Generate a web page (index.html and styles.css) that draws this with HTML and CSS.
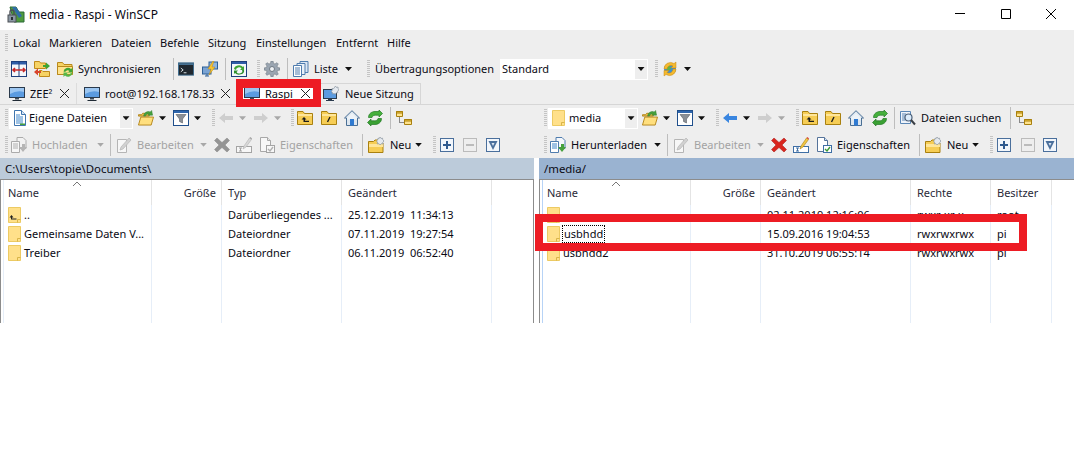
FILE: index.html
```html
<!DOCTYPE html>
<html lang="de">
<head>
<meta charset="utf-8">
<title>media - Raspi - WinSCP</title>
<link rel="stylesheet" href="styles.css">
</head>
<body>
<svg class="defs" aria-hidden="true">
  <symbol id="logo" viewBox="0 0 18 18"><path d="M3 1h6l3 5h5v10H7z" fill="#4f9a3c" stroke="#2c6a38"/><path d="M5 1h4l6 9-3 2z" fill="#2f6da8"/><rect x="1" y="9" width="8" height="7" fill="#8b97a3" stroke="#4a4f55"/><path d="M3 9V6a2 2 0 0 1 4 0v3" fill="none" stroke="#4a4f55" stroke-width="1.4"/><rect x="4" y="11" width="2" height="3" fill="#2b3036"/></symbol>
  <symbol id="compare" viewBox="0 0 16 16"><rect x=".5" y=".5" width="15" height="15" fill="#f4f7fb" stroke="#1f3f7c"/><rect x="1" y="1" width="14" height="2.5" fill="#2f5da8"/><path d="M8 1v14" stroke="#1f3f7c"/><path d="M2 9h12M4 7 2 9l2 2M12 7l2 2-2 2" fill="none" stroke="#c62828" stroke-width="1.6"/></symbol>
  <symbol id="syncf" viewBox="0 0 16 16"><path d="M.5.500h5l1 1.500h5v5.500H.5z" fill="#f6d365" stroke="#c08a1a"/><path d="M5.500 9.500h2.500l1 1h6.500v5h-10z" fill="#f6d365" stroke="#c08a1a"/><path d="M9 4h3V1.500L16 5l-4 3.500V6H9z" fill="#3fa535"/><path d="M7 12H4v2.500L0 11l4-3.500V10h3z" fill="#d8452c"/></symbol>
  <symbol id="sync" viewBox="0 0 16 16"><path d="M.5 1.500h5l1.500 2h8v10H.5z" fill="#f6d365" stroke="#b9891c"/><path d="M.5 5.500h15v8H.5z" fill="#ffe38d" stroke="#b9891c"/><path d="M6.500 10.500a4.500 4.500 0 0 1 7.500-2.500l1.500-1.200v4.700h-4.700l1.600-1.500a2.600 2.600 0 0 0-4.200 1z" fill="#3fa535"/><path d="M15.500 12a4.500 4.500 0 0 1-7.500 2.500L6.500 16v-4.500h4.700L9.600 13a2.600 2.600 0 0 0 4.200-1z" fill="#56b748"/></symbol>
  <symbol id="term" viewBox="0 0 17 16"><rect x=".5" y="1.500" width="16" height="13" fill="#20282f" stroke="#3d6c8e"/><rect x="1" y="2" width="15" height="1.600" fill="#4e7ea3"/><path d="m3 7 2.500 2L3 11" fill="none" stroke="#dfe6ea"/><path d="M6 12h3" stroke="#dfe6ea"/></symbol>
  <symbol id="putty" viewBox="0 0 16 16"><rect x="7" y="1" width="8.500" height="7" fill="#8fb5df" stroke="#2c5f96"/><rect x=".5" y="6" width="8.500" height="7" fill="#7aa3d3" stroke="#2c5f96"/><path d="M3 15h4M5 13v2" stroke="#2c5f96"/><path d="M11 0 6 8h3l-2 6 6-8h-3l2-6z" fill="#f7c531" stroke="#c18a14" stroke-width=".5"/></symbol>
  <symbol id="winref" viewBox="0 0 16 16"><rect x=".5" y=".5" width="15" height="15" fill="#f4f7fb" stroke="#1f3f7c"/><rect x="1" y="1" width="14" height="2" fill="#2f5da8"/><path d="M3 8a5 4 0 0 1 9-2l1-1v4H9l1.500-1.500A3 2.500 0 0 0 5 9z" fill="#3fa535"/><path d="M13 9a5 4 0 0 1-9 3l-1 1V9.500h4L5.500 11a3 2.500 0 0 0 5.500-2z" fill="#2e8f2c"/></symbol>
  <symbol id="gear" viewBox="0 0 16 16"><path d="M7 0h2l.5 2.400 1.500.6 2-1.300L14.300 3 13 5l.6 1.500L16 7v2l-2.400.5-.6 1.500 1.300 2-1.300 1.300-2-1.300-1.500.6L9 16H7l-.5-2.400-1.500-.6-2 1.300L1.700 13 3 11l-.6-1.500L0 9V7l2.400-.5L3 5 1.700 3 3 1.700 5 3l1.500-.6z" fill="#9aa5b1" stroke="#6e7883" stroke-width=".6"/><circle cx="8" cy="8" r="2.500" fill="#eef1f4" stroke="#6e7883"/></symbol>
  <symbol id="list" viewBox="0 0 16 16"><path d="M7 .5h8v11H7z" fill="#dbe6f3" stroke="#4f7cae"/><path d="M4 2.500h8v11H4z" fill="#e9f0f8" stroke="#4f7cae"/><path d="M.5 4.500h8v11h-8z" fill="#fff" stroke="#4f7cae"/><path d="M2 7h5M2 9h5M2 11h5M2 13h5" stroke="#4f7cae"/></symbol>
  <symbol id="globe" viewBox="0 0 16 16"><circle cx="8" cy="8" r="6" fill="#3d8fd8"/><path d="M5 4l3 1 1 3-3 2-2-2zM10 10l3-1-1 3-2 1z" fill="#5fb24a"/><path d="M2 8a6.500 6.500 0 0 1 10-5.500L14 1v6H9l2-2a4 4 0 0 0-6 3z" fill="#f5b92f" stroke="#c68a12" stroke-width=".5"/><path d="M14 8a6.500 6.500 0 0 1-10 5.500L2 15V9.500h5l-2 2a4 4 0 0 0 6-3.500z" fill="#f5b92f" stroke="#c68a12" stroke-width=".5"/></symbol>
  <symbol id="mon" viewBox="0 0 16 16"><rect x=".5" y="1.500" width="15" height="10" fill="#5b9be0" stroke="#2a3a4c"/><path d="M1 2h14v4Q8 4 1 8z" fill="#9cc6f1"/><path d="M6 12h4v1.500H6z" fill="#3d4b5a"/><path d="M3.500 14h9v1h-9z" fill="#1f2a35"/></symbol>
  <symbol id="monnew" viewBox="0 0 16 16"><rect x=".5" y="3.500" width="13" height="9" fill="#5b9be0" stroke="#2a3a4c"/><path d="M5 13h4v1H5zM3 14h8v1H3z" fill="#2a3a4c"/><path d="m12.500 0 1 1.500 1.500-.5.200 1.700L16 4l-1.500 1L15 6.500 13 7l-.5 1.300L11 7.500 9.500 8l-.2-1.700L8 5.500l1.300-1.200L9 2.500l1.700.1z" fill="#e4e9ef" stroke="#7d8a96" stroke-width=".6"/></symbol>
  <symbol id="mydoc" viewBox="0 0 16 16"><path d="M2.500.5h7l4 4v11h-11z" fill="#fff" stroke="#3f74ad"/><path d="M9.500.5v4h4" fill="#d7e6f6" stroke="#3f74ad"/><path d="M4 5h4M4 7h7M4 9h7M4 11h7M4 13h7" stroke="#3f85c9"/><path d="M8 13.500h5v1.500H8z" fill="#46a13e"/></symbol>
  <symbol id="open" viewBox="0 0 17 16"><path d="M.5 4.500h3l1.500-1.500h7v3H.5z" fill="#e8be4c" stroke="#b3851b"/><path d="M.5 15.500l2.500-8.500h13.500l-2.500 8.500z" fill="#ffdf7e" stroke="#b3851b"/><path d="M6 6a5 5 0 0 1 7-4.500L14.500 0l1 5h-5l1.500-1.500A3.500 3.500 0 0 0 8 6z" fill="#46a13e" stroke="#2e7d2e" stroke-width=".5"/></symbol>
  <symbol id="filter" viewBox="0 0 16 16"><rect x=".5" y=".5" width="15" height="15" fill="#fff" stroke="#1f4f8c"/><rect x="1" y="1" width="14" height="2" fill="#2f66ad"/><path d="M3 4.500h10L9.500 9v4l-3-1.500V9z" fill="#8a8f96" stroke="#5b6067" stroke-width=".6"/></symbol>
  <symbol id="back" viewBox="0 0 16 12"><path d="M7 1 1 6l6 5V8h8V4H7z"/></symbol>
  <symbol id="fwd" viewBox="0 0 16 12"><path d="M9 1l6 5-6 5V8H1V4h8z"/></symbol>
  <symbol id="up" viewBox="0 0 16 16"><path d="M.5 3.500v-2h5.500l1.500 2h8v11h-15z" fill="#f6cd55" stroke="#a9800f"/><path d="M1 4h14v2H1z" fill="#ffe69a"/><path d="M7 7 4.500 9.500H6.500V12H12v-1.200H8V9.500h1.500z" fill="#1c1c1c"/></symbol>
  <symbol id="root" viewBox="0 0 16 16"><path d="M.5 3.500v-2h5.500l1.500 2h8v11h-15z" fill="#f6cd55" stroke="#a9800f"/><path d="M1 4h14v2H1z" fill="#ffe69a"/><path d="M6.500 12 9 7" stroke="#1c1c1c" stroke-width="1.400"/></symbol>
  <symbol id="home" viewBox="0 0 16 16"><path d="M8 .7.500 8h2v7.500h11V8h2z" fill="#dde6ef" stroke="#4a6f95"/><path d="M3 8l5-5 5 5v1.500H3z" fill="#eef3f8"/><rect x="6" y="9" width="4" height="6.500" fill="#2f7ad1"/></symbol>
  <symbol id="refresh" viewBox="0 0 16 16"><path d="M1.500 7.500C1.500 3.500 5 1.500 8 1.500h4V0l3.500 3.500L12 7V5.200H8.500C6.500 5.200 5.500 6 5 7.500z" fill="#46b03c" stroke="#237a25" stroke-width=".7"/><path d="M14.500 8.500c0 4-3.500 6-6.500 6H4V16L.5 12.500 4 9v1.800h3.500c2 0 3-.8 3.500-2.300z" fill="#3aa033" stroke="#237a25" stroke-width=".7"/></symbol>
  <symbol id="tree" viewBox="0 0 16 16"><path d="M.5 1.500h6v5h-6zM8.500 9.500h7v5h-7z" fill="#ffe38d" stroke="#a9800f"/><path d="M.5 1.500h6v1.500h-6zM8.500 9.500h7V11h-7z" fill="#f2c744" stroke="#a9800f"/><path d="M3.500 7.500v5h4" fill="none" stroke="#222" stroke-dasharray="1 1"/></symbol>
  <symbol id="search" viewBox="0 0 16 16"><path d="M.5 1.500h10v12H.5z" fill="#eef3fa" stroke="#5a86b5"/><path d="M2 4h4M2 6h3M2 8h3M2 10h3" stroke="#5a86b5"/><circle cx="8.500" cy="7.500" r="3.500" fill="#dcecfb" stroke="#4a5f78" stroke-width="1.200"/><path d="m11 10 4 4.500" stroke="#3a3f45" stroke-width="2"/></symbol>
  <symbol id="upl" viewBox="0 0 16 16"><path d="M6 .5h6l3 3v8H6z" fill="#f4f7fb" stroke="#4f7cae"/><path d="M.5 4.500h8v11h-8z" fill="#fff" stroke="#4f7cae"/><path d="M2 7h5M2 9h5M2 11h5" stroke="#3f85c9"/><path d="M8 10h3V7h3v3h2l-4 5z" fill="#46a13e"/></symbol>
  <symbol id="edit" viewBox="0 0 16 16"><path d="M1.500 2.500h9v13h-9z" fill="#fff" stroke="#888"/><path d="M4 13l1-3 8-9 2 2-8 9z" fill="#bbb" stroke="#888" stroke-width=".7"/></symbol>
  <symbol id="del" viewBox="0 0 16 16"><path d="M3 1l5 4.500L13 1l2.500 2.500L11 8l4.500 4.500L13 15l-5-4.500L3 15 .5 12.500 5 8 .5 3.500z" fill="#d9251d" stroke="#a31515" stroke-width=".5"/></symbol>
  <symbol id="ren" viewBox="0 0 16 16"><rect x=".5" y="9.500" width="15" height="6" fill="#fff" stroke="#3f6fa5"/><path d="M3 11h3M4.500 11v3M3 14h3" stroke="#3f6fa5"/><path d="M7 12l1-3 5.500-8 2 1.500L10 10z" fill="#f2c744" stroke="#a9800f" stroke-width=".6"/><path d="m13.500 1 2 1.500 .5-1L14.500 0z" fill="#d9433a"/></symbol>
  <symbol id="prop" viewBox="0 0 16 16"><path d="M1.500.5h7l3 3v11h-10z" fill="#fff" stroke="#55739a"/><path d="M8.500.5v3h3" fill="#d7e6f6" stroke="#55739a"/><rect x="7.500" y="8.500" width="8" height="7" fill="#fff" stroke="#3f6fa5"/><path d="m9 12 2 2 3-4" fill="none" stroke="#3c9a35" stroke-width="1.400"/></symbol>
  <symbol id="newf" viewBox="0 0 16 16"><path d="M.5 15.500v-11h5l1.500-1.500h4v3h4v9.500z" fill="#f6cd55" stroke="#a9800f"/><path d="M1 7h14v3H1z" fill="#ffe69a"/><path d="m12 0 1 1.500 1.500-.4.300 1.700L16 4l-1.200 1.200.2 1.800-1.800-.2L12 8l-1-1.300-1.700.3.200-1.800L8.500 4l1.300-1.200L10 1.100l1.200.4z" fill="#e4e9ef" stroke="#7d8a96" stroke-width=".6"/></symbol>
  <symbol id="plus" viewBox="0 0 14 14"><rect x=".5" y=".5" width="13" height="13" fill="#f2f6fb" stroke="#4a6f9c"/><path d="M7 3v8M3 7h8" stroke="#2f5a8f" stroke-width="2"/></symbol>
  <symbol id="minus" viewBox="0 0 14 14"><rect x=".5" y=".5" width="13" height="13" fill="#eee" stroke="#bbb"/><path d="M3 7h8" stroke="#bbb" stroke-width="2"/></symbol>
  <symbol id="vee" viewBox="0 0 14 14"><rect x=".5" y=".5" width="13" height="13" fill="#f2f6fb" stroke="#4a6f9c"/><path d="M2.500 3h9L7 12z" fill="#4a6f9c"/><path d="M5.500 5h3L7 8z" fill="#dbe5f1"/></symbol>
  <symbol id="folder" viewBox="0 0 13 16"><path d="M.5.500h12v15H.5z" fill="#ffe08a" stroke="#ecca63"/><path d="M9.500 15.500v-3h3" fill="none" stroke="#d9b548"/></symbol>
  <symbol id="folderup" viewBox="0 0 13 16"><path d="M.5.500h12v15H.5z" fill="#ffe08a" stroke="#ecca63"/><path d="M9.500 15.500v-3h3" fill="none" stroke="#d9b548"/><path d="M3.500 8 1.500 10.500h1.500V12.500h5.500V11.500H4V10.500h1.500z" fill="#222"/></symbol>
</svg>

<div class="app">
  <header class="title">
    <svg class="logo"><use href="#logo"/></svg>
    <span class="title-text">media - Raspi - WinSCP</span>
    <div class="win">
      <span class="win-btn"><svg class="win-ic"><path d="M0 4.500h10" stroke="#000"/></svg></span>
      <span class="win-btn"><svg class="win-ic"><path d="M.5.500h9v9h-9z" fill="none" stroke="#000"/></svg></span>
      <span class="win-btn"><svg class="win-ic"><path d="m0 0 10 10M10 0 0 10" stroke="#000"/></svg></span>
    </div>
  </header>

  <div class="chrome">
    <nav class="tb menu">
      <i class="grip"></i>
      <span class="m m-lokal">Lokal</span><span class="m m-mark">Markieren</span><span class="m m-dat">Dateien</span><span class="m m-bef">Befehle</span><span class="m m-sit">Sitzung</span><span class="m m-ein">Einstellungen</span><span class="m m-ent">Entfernt</span><span class="m">Hilfe</span>
    </nav>

    <div class="tb tb-main">
      <i class="grip"></i>
      <svg class="ic ml3"><use href="#compare"/></svg>
      <svg class="ic ml7"><use href="#syncf"/></svg>
      <svg class="ic ml7"><use href="#sync"/></svg>
      <span class="lab ml5 w83">Synchronisieren</span>
      <i class="sep ml12"></i>
      <svg class="ic ml4"><use href="#term"/></svg>
      <svg class="ic ml8"><use href="#putty"/></svg>
      <i class="sep ml7"></i>
      <svg class="ic ml5"><use href="#winref"/></svg>
      <i class="grip ml10"></i>
      <svg class="ic ml4"><use href="#gear"/></svg>
      <i class="sep ml7"></i>
      <svg class="ic ml5"><use href="#list"/></svg>
      <span class="lab ml5 w28">Liste</span>
      <i class="caret ml3"></i>
      <i class="grip ml15"></i>
      <span class="lab ml5 w120">Übertragungsoptionen</span>
      <div class="combo combo-std ml5"><span class="combo-text">Standard</span><span class="combo-arrow"><i class="caret"></i></span></div>
      <i class="grip ml7"></i>
      <svg class="ic ml4"><use href="#globe"/></svg>
      <i class="caret ml6"></i>
    </div>

    <div class="tabs">
      <div class="tab tab-zee"><svg class="ic"><use href="#mon"/></svg><span class="lab ml5 w22">ZEE²</span><svg class="x ml8"><path d="m0 0 9 9M9 0 0 9" stroke="#222"/></svg></div>
      <div class="tab tab-root"><svg class="ic"><use href="#mon"/></svg><span class="lab ml5 w108">root@192.168.178.33</span><svg class="x ml8"><path d="m0 0 9 9M9 0 0 9" stroke="#222"/></svg></div>
      <div class="tab tab-active"><svg class="ic"><use href="#mon"/></svg><span class="lab ml5 w28">Raspi</span><svg class="x ml8"><path d="m0 0 9 9M9 0 0 9" stroke="#222"/></svg></div>
      <div class="tab tab-new"><svg class="ic"><use href="#monnew"/></svg><span class="lab ml6 w70">Neue Sitzung</span></div>
    </div>

    <div class="panes-tb">
      <div class="pane-tb">
        <div class="tb tb-sub">
          <i class="grip"></i>
          <div class="combo combo-l ml1"><svg class="ic ml3"><use href="#mydoc"/></svg><span class="combo-text ml1">Eigene Dateien</span><span class="combo-arrow"><i class="caret"></i></span></div>
          <svg class="ic ml5"><use href="#open"/></svg>
          <i class="caret ml5"></i>
          <svg class="ic ml7"><use href="#filter"/></svg>
          <i class="caret ml5"></i>
          <i class="grip ml11"></i>
          <svg class="arrow ml3 off"><use href="#back"/></svg>
          <i class="caret off ml5"></i>
          <svg class="arrow ml7 off"><use href="#fwd"/></svg>
          <i class="caret off ml5"></i>
          <i class="grip ml10"></i>
          <svg class="ic ml3"><use href="#up"/></svg>
          <svg class="ic ml8"><use href="#root"/></svg>
          <svg class="ic ml7"><use href="#home"/></svg>
          <svg class="ic ml7"><use href="#refresh"/></svg>
          <i class="sep ml7"></i>
          <svg class="ic ml5"><use href="#tree"/></svg>
        </div>
        <div class="tb tb-sub">
          <i class="grip"></i>
          <svg class="ic ml3 off"><use href="#upl"/></svg>
          <span class="lab ml5 w58 dis">Hochladen</span>
          <i class="caret off ml7"></i>
          <i class="sep ml6"></i>
          <svg class="ic ml5 off"><use href="#edit"/></svg>
          <span class="lab ml5 w56 dis">Bearbeiten</span>
          <i class="caret off ml7"></i>
          <svg class="ic ml7 off"><use href="#del"/></svg>
          <svg class="ic ml6 off"><use href="#ren"/></svg>
          <svg class="ic ml7 off"><use href="#prop"/></svg>
          <span class="lab ml5 w74 dis">Eigenschaften</span>
          <i class="sep ml8"></i>
          <svg class="ic ml5"><use href="#newf"/></svg>
          <span class="lab ml6 w22">Neu</span>
          <i class="caret ml3"></i>
          <i class="grip ml11"></i>
          <svg class="box ml4"><use href="#plus"/></svg>
          <svg class="box ml9"><use href="#minus"/></svg>
          <svg class="box ml9"><use href="#vee"/></svg>
        </div>
      </div>
      <div class="pane-tb pane-tb-r">
        <div class="tb tb-sub">
          <i class="grip"></i>
          <div class="combo combo-r ml1"><svg class="foldic ml4"><use href="#folder"/></svg><span class="combo-text ml4">media</span><span class="combo-arrow"><i class="caret"></i></span></div>
          <svg class="ic ml4"><use href="#open"/></svg>
          <i class="caret ml5"></i>
          <svg class="ic ml7"><use href="#filter"/></svg>
          <i class="caret ml5"></i>
          <i class="grip ml11"></i>
          <svg class="arrow ml3 c-blue"><use href="#back"/></svg>
          <i class="caret ml5"></i>
          <svg class="arrow ml7 off"><use href="#fwd"/></svg>
          <i class="caret off ml5"></i>
          <i class="grip ml11"></i>
          <svg class="ic ml3"><use href="#up"/></svg>
          <svg class="ic ml7"><use href="#root"/></svg>
          <svg class="ic ml7"><use href="#home"/></svg>
          <svg class="ic ml8"><use href="#refresh"/></svg>
          <i class="sep ml6"></i>
          <svg class="ic ml5"><use href="#search"/></svg>
          <span class="lab ml5 w81">Dateien suchen</span>
          <i class="sep ml8"></i>
          <svg class="ic ml5"><use href="#tree"/></svg>
        </div>
        <div class="tb tb-sub">
          <i class="grip"></i>
          <svg class="ic ml3"><use href="#upl"/></svg>
          <span class="lab ml5 w76">Herunterladen</span>
          <i class="caret ml7"></i>
          <i class="sep ml6"></i>
          <svg class="ic ml5 off"><use href="#edit"/></svg>
          <span class="lab ml5 w56 dis">Bearbeiten</span>
          <i class="caret off ml7"></i>
          <svg class="ic ml7"><use href="#del"/></svg>
          <svg class="ic ml6"><use href="#ren"/></svg>
          <svg class="ic ml7"><use href="#prop"/></svg>
          <span class="lab ml5 w74">Eigenschaften</span>
          <i class="sep ml8"></i>
          <svg class="ic ml5"><use href="#newf"/></svg>
          <span class="lab ml6 w22">Neu</span>
          <i class="caret ml3"></i>
          <i class="grip ml11"></i>
          <svg class="box ml4"><use href="#plus"/></svg>
          <svg class="box ml10"><use href="#minus"/></svg>
          <svg class="box ml8"><use href="#vee"/></svg>
        </div>
      </div>
    </div>
  </div>

  <main class="panels">
    <section class="panel panel-l">
      <div class="path path-l">C:\Users\topie\Documents\</div>
      <div class="list list-l">
        <div class="col c-name first">
          <div class="hd">Name<svg class="sort"><path d="m0 4 4-4 4 4" fill="none" stroke="#777"/></svg></div>
          <div class="cell"><svg class="foldic"><use href="#folderup"/></svg><span class="ml3">..</span></div>
          <div class="cell"><svg class="foldic"><use href="#folder"/></svg><span class="ml3">Gemeinsame Daten V...</span></div>
          <div class="cell"><svg class="foldic"><use href="#folder"/></svg><span class="ml3">Treiber</span></div>
        </div>
        <div class="col c-size"><div class="hd right">Größe</div></div>
        <div class="col c-type">
          <div class="hd">Typ</div>
          <div class="cell">Darüberliegendes ...</div>
          <div class="cell">Dateiordner</div>
          <div class="cell">Dateiordner</div>
        </div>
        <div class="col c-date">
          <div class="hd">Geändert</div>
          <div class="cell">25.12.2019&nbsp; 11:34:13</div>
          <div class="cell">07.11.2019&nbsp; 19:27:54</div>
          <div class="cell">06.11.2019&nbsp; 06:52:40</div>
        </div>
      </div>
    </section>
    <section class="panel panel-r">
      <div class="path path-r">/media/</div>
      <div class="list list-r">
        <div class="col c-name-r first active">
          <div class="hd">Name<svg class="sort"><path d="m0 4 4-4 4 4" fill="none" stroke="#777"/></svg></div>
          <div class="cell"><svg class="foldic"><use href="#folder"/></svg></div>
          <div class="cell"><svg class="foldic"><use href="#folder"/></svg><span class="focus">usbhdd</span></div>
          <div class="cell"><svg class="foldic"><use href="#folder"/></svg><span class="ml3">usbhdd2</span></div>
        </div>
        <div class="col c-size"><div class="hd right">Größe</div></div>
        <div class="col c-date">
          <div class="hd">Geändert</div>
          <div class="cell">02.11.2019 12:16:06</div>
          <div class="cell">15.09.2016 19:04:53</div>
          <div class="cell">31.10.2019 06:55:14</div>
        </div>
        <div class="col c-perm">
          <div class="hd">Rechte</div>
          <div class="cell">rwxr-xr-x</div>
          <div class="cell">rwxrwxrwx</div>
          <div class="cell">rwxrwxrwx</div>
        </div>
        <div class="col c-own">
          <div class="hd">Besitzer</div>
          <div class="cell">root</div>
          <div class="cell">pi</div>
          <div class="cell">pi</div>
        </div>
      </div>
    </section>
  </main>

  <div class="mark mark-tab"></div>
  <div class="mark mark-row"></div>
</div>
</body>
</html>
```
FILE: styles.css
```css
* { box-sizing: border-box; }
html, body { margin: 0; padding: 0; background: #fff; }
body { font: 11px/16px "Noto Sans", "Open Sans", "Liberation Sans", sans-serif; color: #0a0a14; overflow: hidden; }
.defs { position: absolute; width: 0; height: 0; }
.app { position: relative; width: 1074px; height: 460px; display: flex; flex-direction: column; }

/* title bar */
.title { height: 30px; display: flex; align-items: center; padding-left: 7px; background: #fff; }
.logo { width: 18px; height: 18px; }
.title-text { margin-left: 4px; font-size: 12px; }
.win { margin-left: auto; align-self: flex-start; display: flex; }
.win-btn { width: 45.500px; height: 28px; display: flex; align-items: center; justify-content: center; }
.win-ic { width: 10px; height: 10px; }

/* chrome */
.chrome { background: #eee; height: 128px; display: flex; flex-direction: column; }
.tb { display: flex; align-items: center; padding-left: 5px; white-space: nowrap; }
.menu { height: 26px; }
.tb-main { height: 26px; }
.tb-sub { height: 26.500px; }
.m { margin-right: 10px; }
.m-lokal { margin-left: 5px; width: 26px; }
.m-mark { width: 52px; }
.m-dat { width: 39px; }
.m-bef { width: 38px; }
.m-sit { width: 38px; }
.m-ein { width: 70px; }
.m-ent { width: 41px; }

.grip { width: 3px; height: 18px; flex: none; background: repeating-linear-gradient(#c4c4c4 0 1px, transparent 1px 2px); }
.sep { width: 1px; height: 22px; flex: none; background: #bdbdbd; }
.ic { width: 16px; height: 16px; flex: none; }
.box { width: 14px; height: 14px; flex: none; }
.arrow { width: 16px; height: 12px; flex: none; }
.foldic { width: 13px; height: 16px; flex: none; }
.c-blue { fill: #3a86e0; }
.off { opacity: .55; filter: grayscale(1); fill: #b5b5b5; }
.caret { width: 7px; height: 4px; flex: none; background: #111; clip-path: polygon(0 0, 100% 0, 50% 100%); }
.caret.off { background: #a8a8a8; opacity: 1; filter: none; }
.lab { flex: none; white-space: nowrap; }
.dis { color: #a3a3a3; }

.combo { display: flex; align-items: center; background: #fff; flex: none; height: 21px; }
.combo-text { flex: 1; }
.combo-arrow { width: 12px; height: 19px; margin-right: 1px; background: #eee; display: flex; align-items: center; justify-content: center; }
.combo-std { width: 148px; padding-left: 2px; }
.combo-l { width: 124px; }
.combo-r { width: 90px; }

/* tabs */
.tabs { height: 23px; display: flex; align-items: flex-end; border-bottom: 1px solid #d6d6d6; }
.tab { height: 21px; display: flex; align-items: center; flex: none; }
.x { width: 9px; height: 9px; flex: none; }
.tab-zee { width: 77px; padding-left: 9px; border-right: 1px solid #dcdcdc; }
.tab-root { width: 159px; padding-left: 7px; }
.tab-active { width: 85px; padding-left: 8px; background: #fff; }
.tab-new { width: 100px; padding-left: 2px; border: 1px solid #d6d6d6; border-left: 0; border-bottom: 0; }

.panes-tb { display: flex; }
.pane-tb { width: 539px; flex: none; }
.pane-tb-r { width: 535px; }

/* spacing helpers */
.ml1 { margin-left: 1px; } .ml3 { margin-left: 3px; } .ml4 { margin-left: 4px; } .ml5 { margin-left: 5px; }
.ml6 { margin-left: 6px; } .ml7 { margin-left: 7px; } .ml8 { margin-left: 8px; } .ml9 { margin-left: 9px; }
.ml10 { margin-left: 10px; } .ml11 { margin-left: 11px; } .ml12 { margin-left: 12px; } .ml15 { margin-left: 15px; }
.w22 { width: 22px; } .w28 { width: 28px; } .w56 { width: 56px; } .w58 { width: 58px; } .w70 { width: 70px; }
.w74 { width: 74px; } .w76 { width: 76px; } .w81 { width: 81px; } .w83 { width: 83px; } .w108 { width: 108px; } .w120 { width: 120px; }

/* file panels */
.panels { display: flex; height: 165px; }
.panel { display: flex; flex-direction: column; }
.panel-l { width: 534px; }
.panel-r { width: 535px; margin-left: 5px; }
.path { height: 21px; padding-left: 5px; line-height: 21px; flex: none; font-size: 11.4px; }
.path-l { background: #bccbda; }
.path-r { background: #9ab3d1; }
.list { flex: 1; display: flex; border-top: 1px solid #8c8c8c; border-left: 1px solid #8c8c8c; padding-left: 2px; }
.list-l { border-right: 1px solid #8c8c8c; }
.col { flex: none; border-right: 1px solid #e6eef8; }
.first { border-left: 1px solid #e6eef8; }
.first.active { border-left-color: #b7d3f6; }
.c-name { width: 149px; }
.c-name-r { width: 149px; }
.c-size { width: 70px; }
.c-type { width: 120px; }
.c-date { width: 150px; }
.c-perm { width: 80px; }
.c-own { width: 61px; }
.hd { position: relative; height: 25px; padding: 5px 0 0 6px; margin-right: -1px; border-right: 1px solid #e4e4e4; color: #2a2a38; background: #fff; }
.first .hd { padding-left: 4px; }
.right { text-align: right; padding-right: 5px; }
.sort { position: absolute; left: 69px; top: 2px; width: 8px; height: 5px; }
.cell { height: 19px; padding-left: 6px; display: flex; align-items: center; white-space: nowrap; }
.first .cell { padding-left: 4px; }
.focus { margin-left: 3px; padding: 0 1px; outline: 1px dotted #000; outline-offset: 0; }

/* annotation frames drawn over the screenshot */
.mark { position: absolute; border: 8px solid #ed1c24; pointer-events: none; }
.mark-tab { left: 236px; top: 79px; width: 85px; height: 28px; border-width: 9px 8px 8px 7px; }
.mark-row { left: 535px; top: 214px; width: 492px; height: 37px; }
```
